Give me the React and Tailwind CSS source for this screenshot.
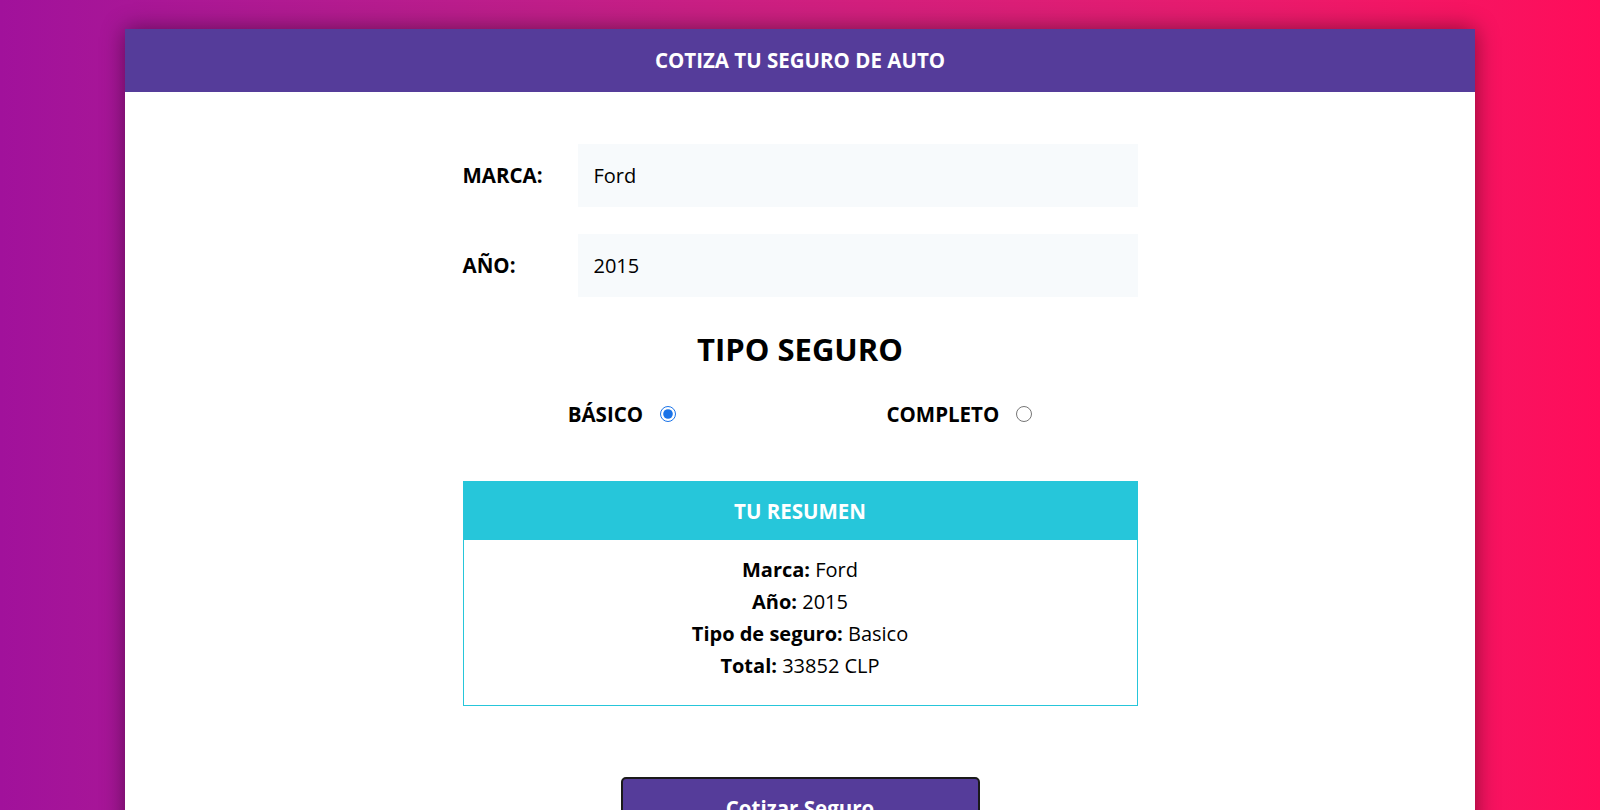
import { useState } from 'react';

const App = () => {
  const [plan, setPlan] = useState('basico');

  return (
    <div
      className="min-h-[810px] bg-gradient-to-r from-[#a1119b] to-[#ff0c5a] pt-[29px] overflow-hidden"
      style={{ fontFamily: '"Open Sans", "Noto Sans", sans-serif' }}
    >
      <div className="w-[1350px] mx-auto bg-white shadow-[0_0_22px_rgba(0,0,0,0.45)] pb-10">
        {/* Header */}
        <div className="bg-[#553c9a] h-[63px] flex items-center justify-center">
          <h1 className="text-white font-bold text-[20.5px]">COTIZA TU SEGURO DE AUTO</h1>
        </div>

        <div className="w-[675px] mx-auto pt-[52px]">
          {/* Marca */}
          <div className="flex items-center mb-[27px]">
            <label className="w-[115px] font-bold text-[20.5px] text-black">MARCA:</label>
            <div className="flex-1 h-[63px] bg-[#f7fafc] flex items-center px-4 text-[20px] text-black">Ford</div>
          </div>

          {/* Año */}
          <div className="flex items-center">
            <label className="w-[115px] font-bold text-[20.5px] text-black">AÑO:</label>
            <div className="flex-1 h-[63px] bg-[#f7fafc] flex items-center px-4 text-[20px] text-black">2015</div>
          </div>

          {/* Tipo seguro */}
          <h2 className="text-center font-bold text-[31px] text-black mt-[30px] leading-[44px]">TIPO SEGURO</h2>

          <div className="flex justify-around items-center mt-[28px] h-[30px]">
            <label className="flex items-center gap-[17px] font-bold text-[20.5px] text-black">
              BÁSICO
              <input
                type="radio"
                name="plan"
                checked={plan === 'basico'}
                onChange={() => setPlan('basico')}
                className="w-[16px] h-[16px] accent-[#1a73e8] m-0"
              />
            </label>
            <label className="flex items-center gap-[17px] font-bold text-[20.5px] text-black">
              COMPLETO
              <input
                type="radio"
                name="plan"
                checked={plan === 'completo'}
                onChange={() => setPlan('completo')}
                className="w-[16px] h-[16px] m-0"
              />
            </label>
          </div>

          {/* Resumen */}
          <div className="mt-[52px] border border-[#26c6da]">
            <div className="bg-[#26c6da] h-[58px] flex items-center justify-center">
              <h3 className="text-white font-bold text-[20.5px]">TU RESUMEN</h3>
            </div>
            <div className="text-center text-[20px] text-black leading-[32px] pt-[14px] pb-[23px]">
              <p><span className="font-bold">Marca:</span> Ford</p>
              <p><span className="font-bold">Año:</span> 2015</p>
              <p><span className="font-bold">Tipo de seguro:</span> Basico</p>
              <p><span className="font-bold">Total:</span> 33852 CLP</p>
            </div>
          </div>

          {/* Boton */}
          <div className="flex justify-center mt-[71px]">
            <button className="w-[359px] h-[62px] bg-[#553c9a] border-2 border-[#1a1a1a] rounded-[5px] text-white font-bold text-[20.5px]">
              Cotizar Seguro
            </button>
          </div>
        </div>
      </div>
    </div>
  );
};

export default App;
